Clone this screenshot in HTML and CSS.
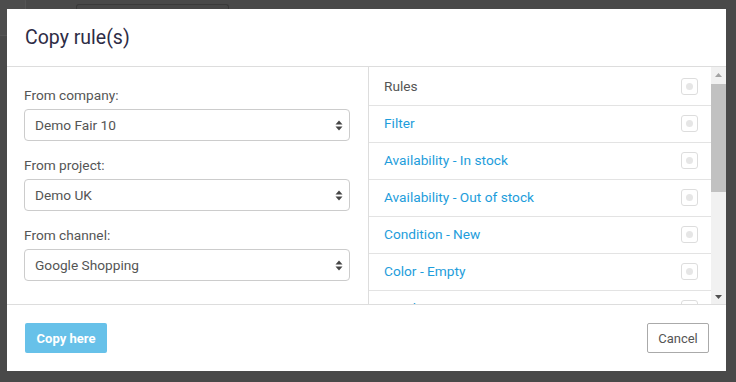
FILE: index.html
```html
<!DOCTYPE html>
<html lang="en">
<head>
    <meta charset="UTF-8">
    <meta name="viewport" content="width=device-width, initial-scale=1.0">
    <title>Copy rule(s)</title>
    <link rel="stylesheet" href="styles.css">
</head>
<body>
    <!-- dimmed page behind the modal -->
    <div class="backdrop">
        <div class="bg-tab"></div>
        <div class="bg-field"></div>
    </div>

    <div class="modal">
        <div class="modal-header">
            <h2>Copy rule(s)</h2>
        </div>

        <div class="modal-body">
            <div class="source">
                <div class="field">
                    <label for="company">From company:</label>
                    <div class="select">
                        <span>Demo Fair 10</span>
                        <svg width="8" height="11" viewBox="0 0 8 11"><path d="M4 0.5L7.5 4.5H0.5Z M4 10.5L7.5 6.5H0.5Z" fill="#444"/></svg>
                    </div>
                </div>
                <div class="field">
                    <label for="project">From project:</label>
                    <div class="select">
                        <span>Demo UK</span>
                        <svg width="8" height="11" viewBox="0 0 8 11"><path d="M4 0.5L7.5 4.5H0.5Z M4 10.5L7.5 6.5H0.5Z" fill="#444"/></svg>
                    </div>
                </div>
                <div class="field">
                    <label for="channel">From channel:</label>
                    <div class="select">
                        <span>Google Shopping</span>
                        <svg width="8" height="11" viewBox="0 0 8 11"><path d="M4 0.5L7.5 4.5H0.5Z M4 10.5L7.5 6.5H0.5Z" fill="#444"/></svg>
                    </div>
                </div>
            </div>

            <div class="rules">
                <div class="rule-list">
                    <div class="rule head"><span>Rules</span><i class="check"></i></div>
                    <div class="rule"><span>Filter</span><i class="check"></i></div>
                    <div class="rule"><span>Availability - In stock</span><i class="check"></i></div>
                    <div class="rule"><span>Availability - Out of stock</span><i class="check"></i></div>
                    <div class="rule"><span>Condition - New</span><i class="check"></i></div>
                    <div class="rule"><span>Color - Empty</span><i class="check"></i></div>
                    <div class="rule"><span>Gender - Empty</span><i class="check"></i></div>
                    <div class="rule"><span>Size - Empty</span><i class="check"></i></div>
                </div>
                <div class="scrollbar">
                    <div class="arrow"><svg width="7" height="4" viewBox="0 0 7 4"><path d="M3.5 0L7 4H0Z" fill="#a3a3a3"/></svg></div>
                    <div class="track"><div class="thumb"></div></div>
                    <div class="arrow"><svg width="7" height="4" viewBox="0 0 7 4"><path d="M0 0H7L3.5 4Z" fill="#505050"/></svg></div>
                </div>
            </div>
        </div>

        <div class="modal-footer">
            <button class="btn-primary">Copy here</button>
            <button class="btn-default">Cancel</button>
        </div>
    </div>
</body>
</html>
```

FILE: styles.css
```css
body {
    margin: 0;
    background: #494949;
    font-family: Roboto, "Liberation Sans", sans-serif;
    font-size: 13.7px;
    color: #555;
    height: 382px;
    overflow: hidden;
}
.backdrop {
    position: absolute;
    top: 0;
    left: 0;
    width: 736px;
    height: 382px;
}
.bg-tab {
    position: absolute;
    left: -2px;
    top: -2px;
    width: 26px;
    height: 36px;
    border: 1px solid #555;
    border-radius: 3px;
    background: #4d4d4d;
}
.bg-field {
    position: absolute;
    left: 76px;
    top: 4px;
    width: 151px;
    height: 10px;
    border: 1px solid #3a3a3a;
    border-bottom: none;
    border-radius: 3px 3px 0 0;
    background: #474747;
}
.modal {
    position: absolute;
    top: 9px;
    left: 7px;
    width: 719px;
    height: 362px;
    background: #fff;
    display: flex;
    flex-direction: column;
}
.modal-header {
    height: 57px;
    border-bottom: 1px solid #ddd;
    padding: 0 18px;
    display: flex;
    align-items: center;
}
.modal-header h2 {
    margin: 0;
    font-size: 19.5px;
    font-weight: 400;
    color: #2e2c45;
}
.modal-body {
    height: 237px;
    display: flex;
    border-bottom: 1px solid #ddd;
}
.source {
    width: 326px;
    padding: 18px 18px 0 17px;
    border-right: 1px solid #ddd;
}
.field {
    margin-bottom: 14px;
}
.field label {
    display: block;
    line-height: 20px;
    margin-bottom: 4px;
    color: #555;
}
.select {
    height: 30px;
    border: 1px solid #ccc;
    border-radius: 4px;
    display: flex;
    align-items: center;
    justify-content: space-between;
    padding: 0 6px 0 10px;
    color: #555;
}
.rules {
    flex: 1;
    display: flex;
    overflow: hidden;
}
.rule-list {
    flex: 1;
    padding-top: 2px;
    overflow: hidden;
}
.rule {
    height: 33px;
    border-bottom: 1px solid #e3e3e3;
    display: flex;
    align-items: center;
    justify-content: space-between;
    padding: 0 13px 3px 15px;
    color: #1e9ddb;
}
.rule.head {
    color: #555;
}
.check {
    width: 15px;
    height: 15px;
    margin-top: 2px;
    border: 1px solid #ddd;
    border-radius: 3px;
    position: relative;
}
.check::after {
    content: "";
    position: absolute;
    left: 4px;
    top: 4px;
    width: 7px;
    height: 7px;
    border-radius: 50%;
    background: #e6e6e6;
}
.scrollbar {
    width: 15px;
    background: #f1f1f1;
    display: flex;
    flex-direction: column;
}
.arrow {
    height: 15px;
    display: flex;
    align-items: center;
    justify-content: center;
}
.track {
    flex: 1;
    padding-top: 2px;
}
.thumb {
    height: 108px;
    background: #c1c1c1;
}
.modal-footer {
    flex: 1;
    display: flex;
    justify-content: space-between;
    align-items: flex-start;
    padding: 18px 17px 0 18px;
}
.modal-footer button {
    height: 30px;
    font-family: Roboto, "Liberation Sans", sans-serif;
    font-size: 13px;
    border-radius: 2px;
    cursor: pointer;
}
.btn-primary {
    width: 82px;
    border: none;
    background: #67c1e9;
    color: #fff;
    font-weight: 700;
}
.btn-default {
    width: 62px;
    border: 1px solid #aaa;
    background: #fff;
    color: #555;
}
```
